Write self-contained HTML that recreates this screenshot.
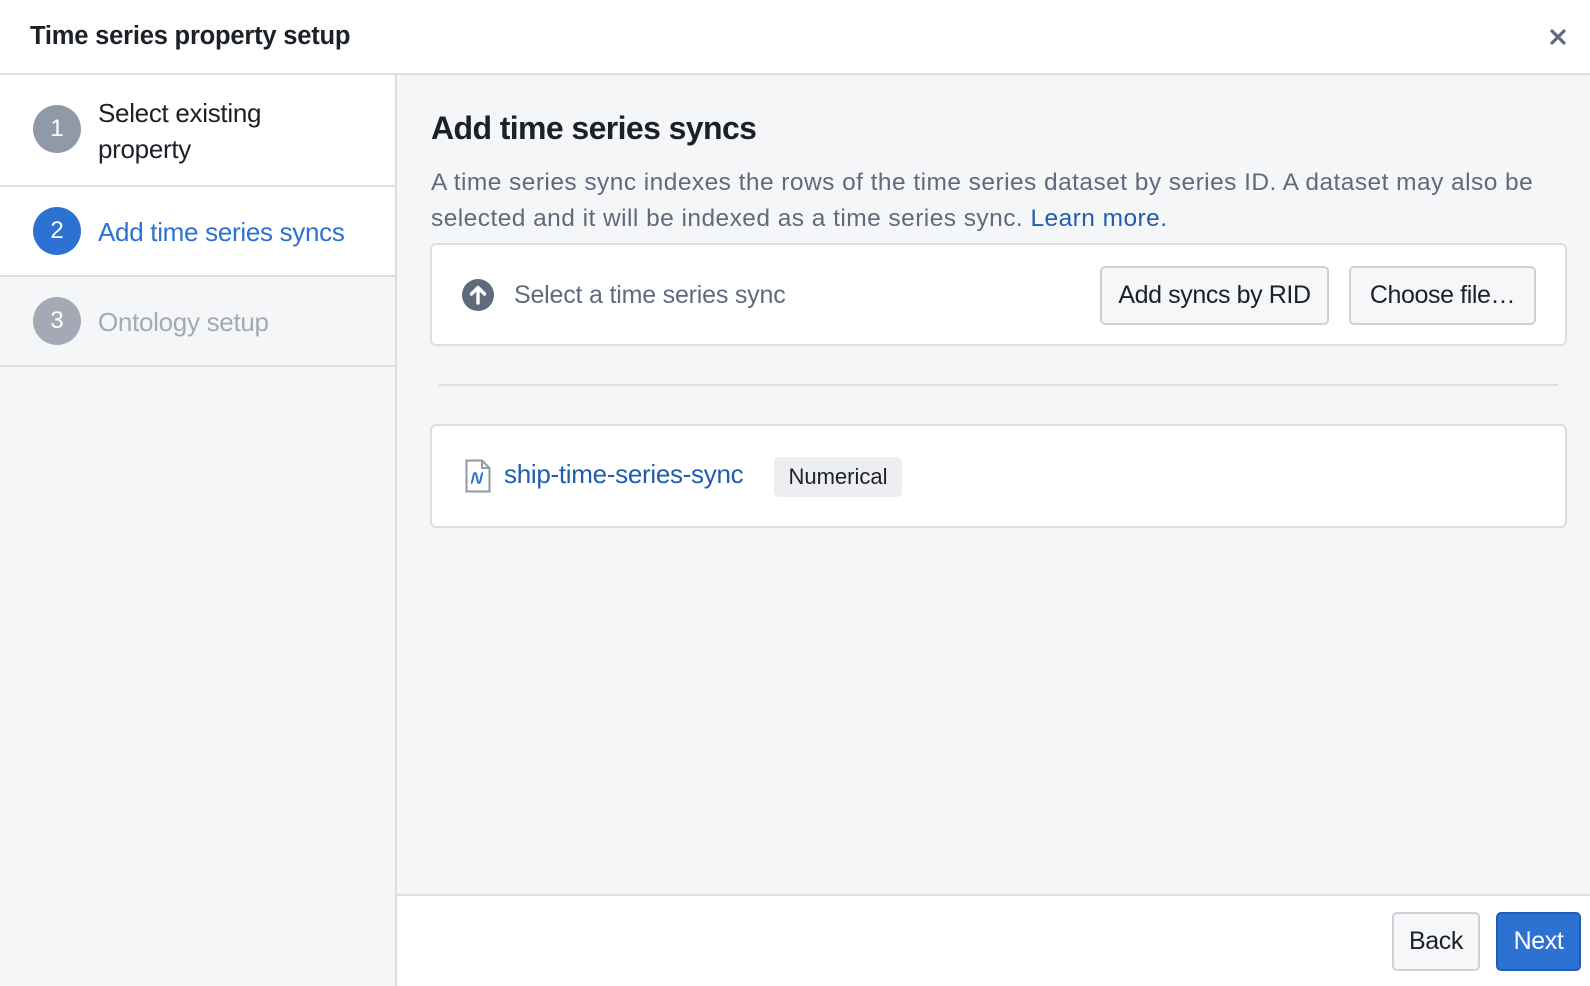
<!DOCTYPE html>
<html><head><meta charset="utf-8"><style>
*{box-sizing:border-box;margin:0;padding:0}
body{width:1590px;height:986px;overflow:hidden;background:#fff;font-family:"Liberation Sans",sans-serif;color:#1c2127;position:relative}
.hdr{position:absolute;left:0;top:0;width:1590px;height:75px;border-bottom:2px solid #dcdee2;background:#fff}
.hdr h1{position:absolute;left:30px;top:22px;font-size:25.5px;font-weight:bold;letter-spacing:-0.2px}
.x{position:absolute;left:1550px;top:29px}
.side{position:absolute;left:0;top:75px;width:397px;height:911px;background:#f5f6f8;border-right:2px solid #dcdee2}
.row{position:absolute;left:0;width:395px;border-bottom:2px solid #dcdee2;background:#fff}
.circ{position:absolute;left:33px;width:48px;height:48px;border-radius:50%;color:#fff;font-size:24px;text-align:center;line-height:48px}
.lbl{position:absolute;left:98px;font-size:26px;letter-spacing:-0.3px;line-height:36px}
.main{position:absolute;left:397px;top:75px;width:1193px;height:820px;background:#f5f6f8}
.foot{position:absolute;left:397px;top:894px;width:1193px;height:92px;background:#fff;border-top:2px solid #dcdee2}
h2{position:absolute;left:431px;top:110px;font-size:32px;font-weight:bold;letter-spacing:-0.6px}
.desc{position:absolute;left:431px;top:165px;width:1150px;font-size:24.5px;line-height:36px;color:#5f6b7c;letter-spacing:0.45px;white-space:nowrap}
.desc a{color:#215db0;text-decoration:none}
.card{position:absolute;left:430px;width:1137px;background:#fff;border:2px solid #dcdee2;border-radius:6px}
.btn{position:absolute;top:21px;height:59px;border:2px solid #cdd0d4;border-radius:5px;background:#f6f7f9;font-size:25px;line-height:55px;text-align:center;letter-spacing:-0.4px}
</style></head><body>
<div class="hdr"><h1>Time series property setup</h1>
<svg class="x" width="16" height="16" viewBox="0 0 16 16"><path d="M2 2L14 14M14 2L2 14" stroke="#5f6b7c" stroke-width="3.2" stroke-linecap="round"/></svg></div>
<div class="side">
<div class="row" style="top:0;height:112px"><div class="circ" style="top:30px;background:#8f99a8">1</div><div class="lbl" style="top:20px">Select existing<br>property</div></div>
<div class="row" style="top:112px;height:90px"><div class="circ" style="top:20px;background:#2d72d2">2</div><div class="lbl" style="top:27px;color:#2d72d2">Add time series syncs</div></div>
<div class="row" style="top:202px;height:90px;background:#f5f6f8"><div class="circ" style="top:20px;background:#a3aab6">3</div><div class="lbl" style="top:27px;color:#a3aab6">Ontology setup</div></div>
</div>
<div class="main"></div>
<h2>Add time series syncs</h2>
<div class="desc">A time series sync indexes the rows of the time series dataset by series ID. A dataset may also be<br>selected and it will be indexed as a time series sync. <a>Learn more.</a></div>
<div class="card" style="top:243px;height:103px">
<svg style="position:absolute;left:30px;top:34px" width="32" height="32" viewBox="0 0 32 32"><circle cx="16" cy="16" r="16" fill="#5f6b7c"/><path d="M16 24V9M9.5 15L16 8.5 22.5 15" stroke="#fff" stroke-width="3.4" fill="none" stroke-linecap="round" stroke-linejoin="round"/></svg>
<div style="position:absolute;left:82px;top:36px;font-size:25px;color:#5f6b7c;letter-spacing:-0.2px">Select a time series sync</div>
<div class="btn" style="left:668px;width:229px">Add syncs by RID</div>
<div class="btn" style="left:917px;width:187px">Choose file…</div>
</div>
<div style="position:absolute;left:439px;top:384px;width:1119px;height:2px;background:#dcdee2"></div>
<div class="card" style="top:424px;height:104px">
<svg style="position:absolute;left:33px;top:33px" width="26" height="34" viewBox="0 0 26 34"><path d="M1.5 1.5H17L24.5 9V32.5H1.5Z" fill="#fff" stroke="#8f99a8" stroke-width="2"/><path d="M17 1.5V9H24.5" fill="none" stroke="#8f99a8" stroke-width="2"/><path d="M6 24C8 24 8 14 10 14S12 24 14 24 16 14 18 14" fill="none" stroke="#2d72d2" stroke-width="2"/></svg>
<div style="position:absolute;left:72px;top:33px;font-size:26px;color:#215db0;letter-spacing:-0.3px">ship-time-series-sync</div>
<div style="position:absolute;left:342px;top:31px;width:128px;height:40px;background:#eceef1;border-radius:5px;font-size:22px;line-height:40px;text-align:center">Numerical</div>
</div>
<div class="foot"></div>
<div class="btn" style="left:1392px;top:912px;width:88px;background:#f6f7f9">Back</div>
<div class="btn" style="left:1496px;top:912px;width:85px;background:#2d72d2;border-color:#215db0;color:#fff">Next</div>
</body></html>
